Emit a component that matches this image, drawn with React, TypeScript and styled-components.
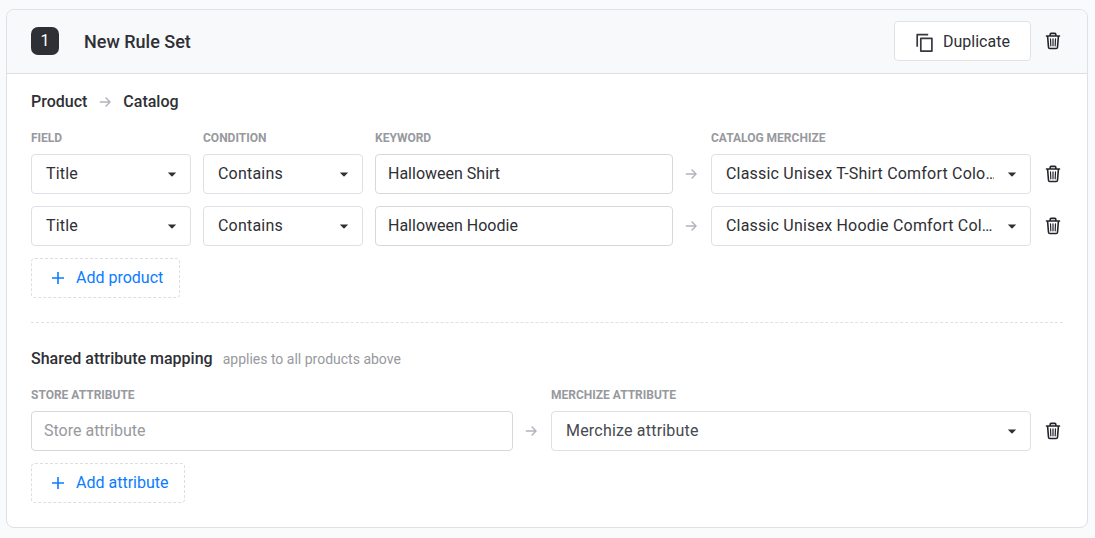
import React from "react";
import styled, { createGlobalStyle } from "styled-components";

const GlobalStyle = createGlobalStyle`
  * { box-sizing: border-box; }
  body {
    margin: 0;
    background: #f9fafc;
    color: #2e3035;
    font-family: Roboto, "Liberation Sans", sans-serif;
    font-size: 16px;
    line-height: 24px;
  }
  button, input { font: inherit; color: inherit; letter-spacing: inherit; }
`;

const Page = styled.main`
  padding: 9px 7px 10px 6px;
`;

const Card = styled.section`
  height: 519px;
  background: #fff;
  border: 1px solid #dee0e5;
  border-radius: 8px;
  overflow: hidden;
`;

const Header = styled.header`
  display: flex;
  align-items: center;
  height: 64px;
  padding: 0 24px 1px;
  background: #f8f9fb;
  border-bottom: 1px solid #dcdfe3;
`;

const Badge = styled.span`
  width: 28px;
  height: 28px;
  border-radius: 7px;
  background: #2e3036;
  color: #fff;
  text-align: center;
  line-height: 27px;
`;

const CardTitle = styled.h2`
  flex: 1;
  margin: 1px 0 0 25px;
  font-size: 18px;
  font-weight: 500;
`;

const DuplicateButton = styled.button`
  display: flex;
  align-items: center;
  width: 137px;
  height: 40px;
  padding: 2px 0 0 20px;
  gap: 8px;
  background: #fff;
  border: 1px solid #e0e2e6;
  border-radius: 4px;
`;

const TrashButton = styled.button`
  display: flex;
  align-items: center;
  justify-content: center;
  width: 20px;
  height: 24px;
  flex: none;
  padding: 0;
  border: 0;
  background: none;
  margin-left: 12px;
`;

const Body = styled.div`
  padding: 16px 24px 0;
`;

const SectionTitle = styled.h3`
  display: flex;
  align-items: center;
  height: 24px;
  margin: 0 0 12px;
  font-size: 16px;
  font-weight: 500;
`;

const Hint = styled.span`
  margin-left: 10px;
  color: #97999e;
  font-size: 14px;
  font-weight: 400;
`;

const Row = styled.div`
  display: flex;
  align-items: center;
  margin-bottom: 12px;
`;

const LabelRow = styled(Row)`
  height: 24px;
  margin-bottom: 4px;
`;

const Cell = styled.div<{ $w: number; $gap?: number }>`
  width: ${(p) => p.$w}px;
  margin-right: ${(p) => p.$gap ?? 0}px;
  flex: none;
`;

const Label = styled.span`
  display: block;
  color: #97999e;
  font-size: 12px;
  font-weight: 700;
  line-height: 16px;
`;

const TextInput = styled.input`
  display: block;
  width: 100%;
  height: 40px;
  padding: 0 12px 2px;
  border: 1px solid #d6d8dc;
  border-radius: 4px;
  background: #fff;
  outline: none;
  &::placeholder { color: #97999e; opacity: 1; }
`;

const SelectBox = styled.div<{ $muted?: boolean }>`
  display: flex;
  align-items: center;
  height: 40px;
  padding: 0 13px 0 14px;
  border: 1px solid #dee0e6;
  border-radius: 4px;
  background: #fff;
  color: ${(p) => (p.$muted ? "#46494f" : "#2e3035")};
`;

const SelectText = styled.span`
  flex: 1;
  min-width: 0;
  margin-right: 13px;
  padding-bottom: 1px;
  overflow: hidden;
  white-space: nowrap;
  letter-spacing: 0.2px;
`;

const Connector = styled.span<{ $inline?: boolean }>`
  display: flex;
  justify-content: center;
  width: ${(p) => (p.$inline ? 36 : 38)}px;
  padding-right: ${(p) => (p.$inline ? 1 : 2)}px;
  flex: none;
`;

const AddButton = styled.button<{ $w: number }>`
  display: flex;
  align-items: center;
  width: ${(p) => p.$w}px;
  height: 40px;
  padding: 0 0 1px 20px;
  gap: 12px;
  color: #0a7cff;
  background: #fff;
  border: 1px dashed #dcdee3;
  border-radius: 4px;
`;

const Divider = styled.hr`
  margin: 24px 0 24px;
  border: 0;
  border-top: 1px dashed #dfe1e4;
`;

const Arrow = () => (
  <svg width="12" height="12" viewBox="0 0 12 12" fill="none" stroke="#b0b5bd" strokeWidth="1.4">
    <path d="M.8 6H11M6.6 1.6 11 6 6.6 10.4" />
  </svg>
);

const Caret = () => (
  <svg width="10" height="5" viewBox="0 0 10 5" fill="#2e3035">
    <path d="M.8.5H9.2L5.5 4.2Q5 4.6 4.5 4.2Z" />
  </svg>
);

const Plus = () => (
  <svg width="12" height="12" viewBox="0 0 12 12" stroke="#0a7cff" strokeWidth="1.6">
    <path d="M0 6H12M6 0V12" />
  </svg>
);

const CopyIcon = () => (
  <svg width="20" height="20" viewBox="0 0 20 20" fill="none" stroke="#36383e" strokeWidth="1.7" strokeLinejoin="round">
    <path d="M2.2 14.8V2.6H13.2M5.8 6.3H16.9V19.1H5.8Z" />
  </svg>
);

const Trash = () => (
  <svg width="16" height="18" viewBox="0 0 16 18" fill="none" stroke="#222429" strokeWidth="1.6" strokeLinecap="round" strokeLinejoin="round">
    <path d="M1.5 4H14.5M5.2 3.8V2.3Q5.2 1.4 6.1 1.4H9.9Q10.8 1.4 10.8 2.3V3.8M2.6 4.2 3.5 15.2Q3.6 16.5 4.8 16.5H11.2Q12.4 16.5 12.5 15.2L13.4 4.2" />
    <path strokeWidth="1.2" d="M5.5 6.8 5.8 13.8M8 6.8V13.8M10.5 6.8 10.2 13.8" />
  </svg>
);

const Remove = () => (
  <TrashButton aria-label="Delete">
    <Trash />
  </TrashButton>
);

const Select = ({ text, muted }: { text: string; muted?: boolean }) => (
  <SelectBox $muted={muted}>
    <SelectText>{text}</SelectText>
    <Caret />
  </SelectBox>
);

const products = [
  { keyword: "Halloween Shirt", catalog: "Classic Unisex T-Shirt Comfort Colo…" },
  { keyword: "Halloween Hoodie", catalog: "Classic Unisex Hoodie Comfort Col…" },
];

export default function App() {
  return (
    <>
      <GlobalStyle />
      <Page>
        <Card>
          <Header>
            <Badge>1</Badge>
            <CardTitle>New Rule Set</CardTitle>
            <DuplicateButton>
              <CopyIcon />
              Duplicate
            </DuplicateButton>
            <Remove />
          </Header>
          <Body>
            <SectionTitle>
              Product
              <Connector $inline>
                <Arrow />
              </Connector>
              Catalog
            </SectionTitle>
            <LabelRow>
              <Cell $w={160} $gap={12}><Label>FIELD</Label></Cell>
              <Cell $w={160} $gap={12}><Label>CONDITION</Label></Cell>
              <Cell $w={298} $gap={38}><Label>KEYWORD</Label></Cell>
              <Cell $w={320}><Label>CATALOG MERCHIZE</Label></Cell>
            </LabelRow>
            {products.map((p) => (
              <Row key={p.keyword}>
                <Cell $w={160} $gap={12}><Select text="Title" /></Cell>
                <Cell $w={160} $gap={12}><Select text="Contains" /></Cell>
                <Cell $w={298}><TextInput defaultValue={p.keyword} /></Cell>
                <Connector><Arrow /></Connector>
                <Cell $w={320}><Select text={p.catalog} /></Cell>
                <Remove />
              </Row>
            ))}
            <AddButton $w={149}>
              <Plus />
              Add product
            </AddButton>
            <Divider />
            <SectionTitle>
              Shared attribute mapping
              <Hint>applies to all products above</Hint>
            </SectionTitle>
            <LabelRow>
              <Cell $w={482} $gap={38}><Label>STORE ATTRIBUTE</Label></Cell>
              <Cell $w={480}><Label>MERCHIZE ATTRIBUTE</Label></Cell>
            </LabelRow>
            <Row>
              <Cell $w={482}><TextInput placeholder="Store attribute" /></Cell>
              <Connector><Arrow /></Connector>
              <Cell $w={480}><Select text="Merchize attribute" muted /></Cell>
              <Remove />
            </Row>
            <AddButton $w={154}>
              <Plus />
              Add attribute
            </AddButton>
          </Body>
        </Card>
      </Page>
    </>
  );
}
